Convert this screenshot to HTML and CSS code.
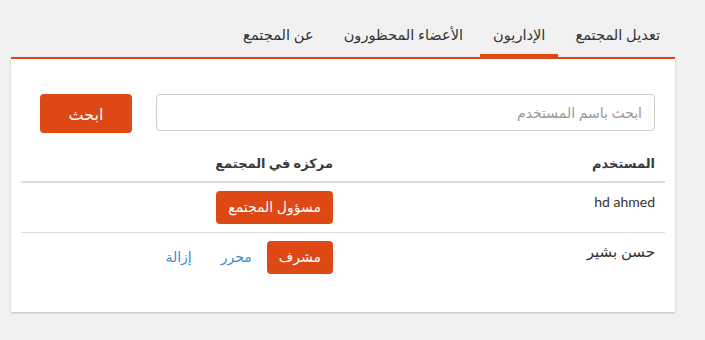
FILE: index.html
```html
<!DOCTYPE html>
<html lang="ar" dir="rtl">
<head>
<meta charset="utf-8">
<link rel="stylesheet" href="styles.css">
</head>
<body>
<div class="page">
  <ul class="tabs">
    <li><a href="#">تعديل المجتمع</a></li>
    <li class="active"><a href="#">الإداريون</a></li>
    <li><a href="#">الأعضاء المحظورون</a></li>
    <li><a href="#">عن المجتمع</a></li>
  </ul>
  <div class="card">
    <form class="search">
      <input class="search-input" type="text" placeholder="ابحث باسم المستخدم">
      <button class="btn btn-search" type="button">ابحث</button>
    </form>
    <table class="mods">
      <thead>
        <tr><th class="col-user">المستخدم</th><th>مركزه في المجتمع</th></tr>
      </thead>
      <tbody>
        <tr>
          <td class="col-user"><span class="latin">hd ahmed</span></td>
          <td><span class="btn btn-role">مسؤول المجتمع</span></td>
        </tr>
        <tr>
          <td class="col-user">حسن بشير</td>
          <td><span class="btn btn-role">مشرف</span><a class="link" href="#">محرر</a><a class="link" href="#">إزالة</a></td>
        </tr>
      </tbody>
    </table>
  </div>
</div>
</body>
</html>
```
FILE: styles.css
```css
html, body {
  margin: 0;
  padding: 0;
}
body {
  background: #f1f1f1;
  font-family: Lato, "Noto Sans", "DejaVu Sans", sans-serif;
  font-size: 14px;
  color: #333;
  height: 340px;
  overflow: hidden;
}
.page {
  padding: 17px 30px 0 11px;
}
.tabs {
  list-style: none;
  margin: 0;
  padding: 0 2px 0 0;
  display: flex;
}
.tabs li {
  margin-left: 4px;
}
.tabs li a {
  display: block;
  padding: 8px 13px 9px;
  line-height: 20px;
  font-size: 14.6px;
  color: #333;
  text-decoration: none;
  border-bottom: 3px solid transparent;
}
.tabs li.active a {
  border-bottom-color: #dd4814;
}
.card {
  background: #fff;
  border-top: 2px solid #dd4814;
  box-shadow: 0 1px 2px rgba(0,0,0,0.22);
  padding: 35px 10px 30px;
}
.search {
  display: flex;
  align-items: flex-start;
  gap: 24px;
  padding: 0 10px 0 9px;
}
.search-input {
  width: 499px;
  height: 37px;
  box-sizing: border-box;
  border: 1px solid #ccc;
  border-radius: 4px;
  padding: 0 12px;
  font-family: inherit;
  font-size: 14px;
  color: #333;
}
.search-input::placeholder {
  color: #999;
}
.btn {
  display: inline-block;
  background: #dd4814;
  color: #fff;
  border: none;
  border-radius: 4px;
  font-family: inherit;
}
.btn-search {
  width: 92px;
  height: 39px;
  font-size: 16px;
}
.mods {
  width: 100%;
  border-collapse: collapse;
  margin-top: 12px;
}
.mods th, .mods td {
  width: 50%;
  text-align: right;
  vertical-align: top;
  padding: 8px 10px;
  line-height: 20px;
}
.mods th {
  font-weight: bold;
  font-size: 13px;
  color: #3a3a3a;
  border-bottom: 2px solid #ddd;
}
.mods td.col-user {
  font-size: 15px;
}
.mods td.col-user .latin {
  font-size: 14px;
}
.mods tbody tr + tr td {
  border-top: 1px solid #ddd;
}
.btn-role {
  padding: 6px 12px 7px;
  line-height: 20px;
  font-size: 14px;
}
.link {
  color: #3a8fc6;
  text-decoration: none;
  display: inline-block;
  padding: 6px 0;
  margin-right: 15px;
}
.link + .link {
  margin-right: 29px;
}
```
